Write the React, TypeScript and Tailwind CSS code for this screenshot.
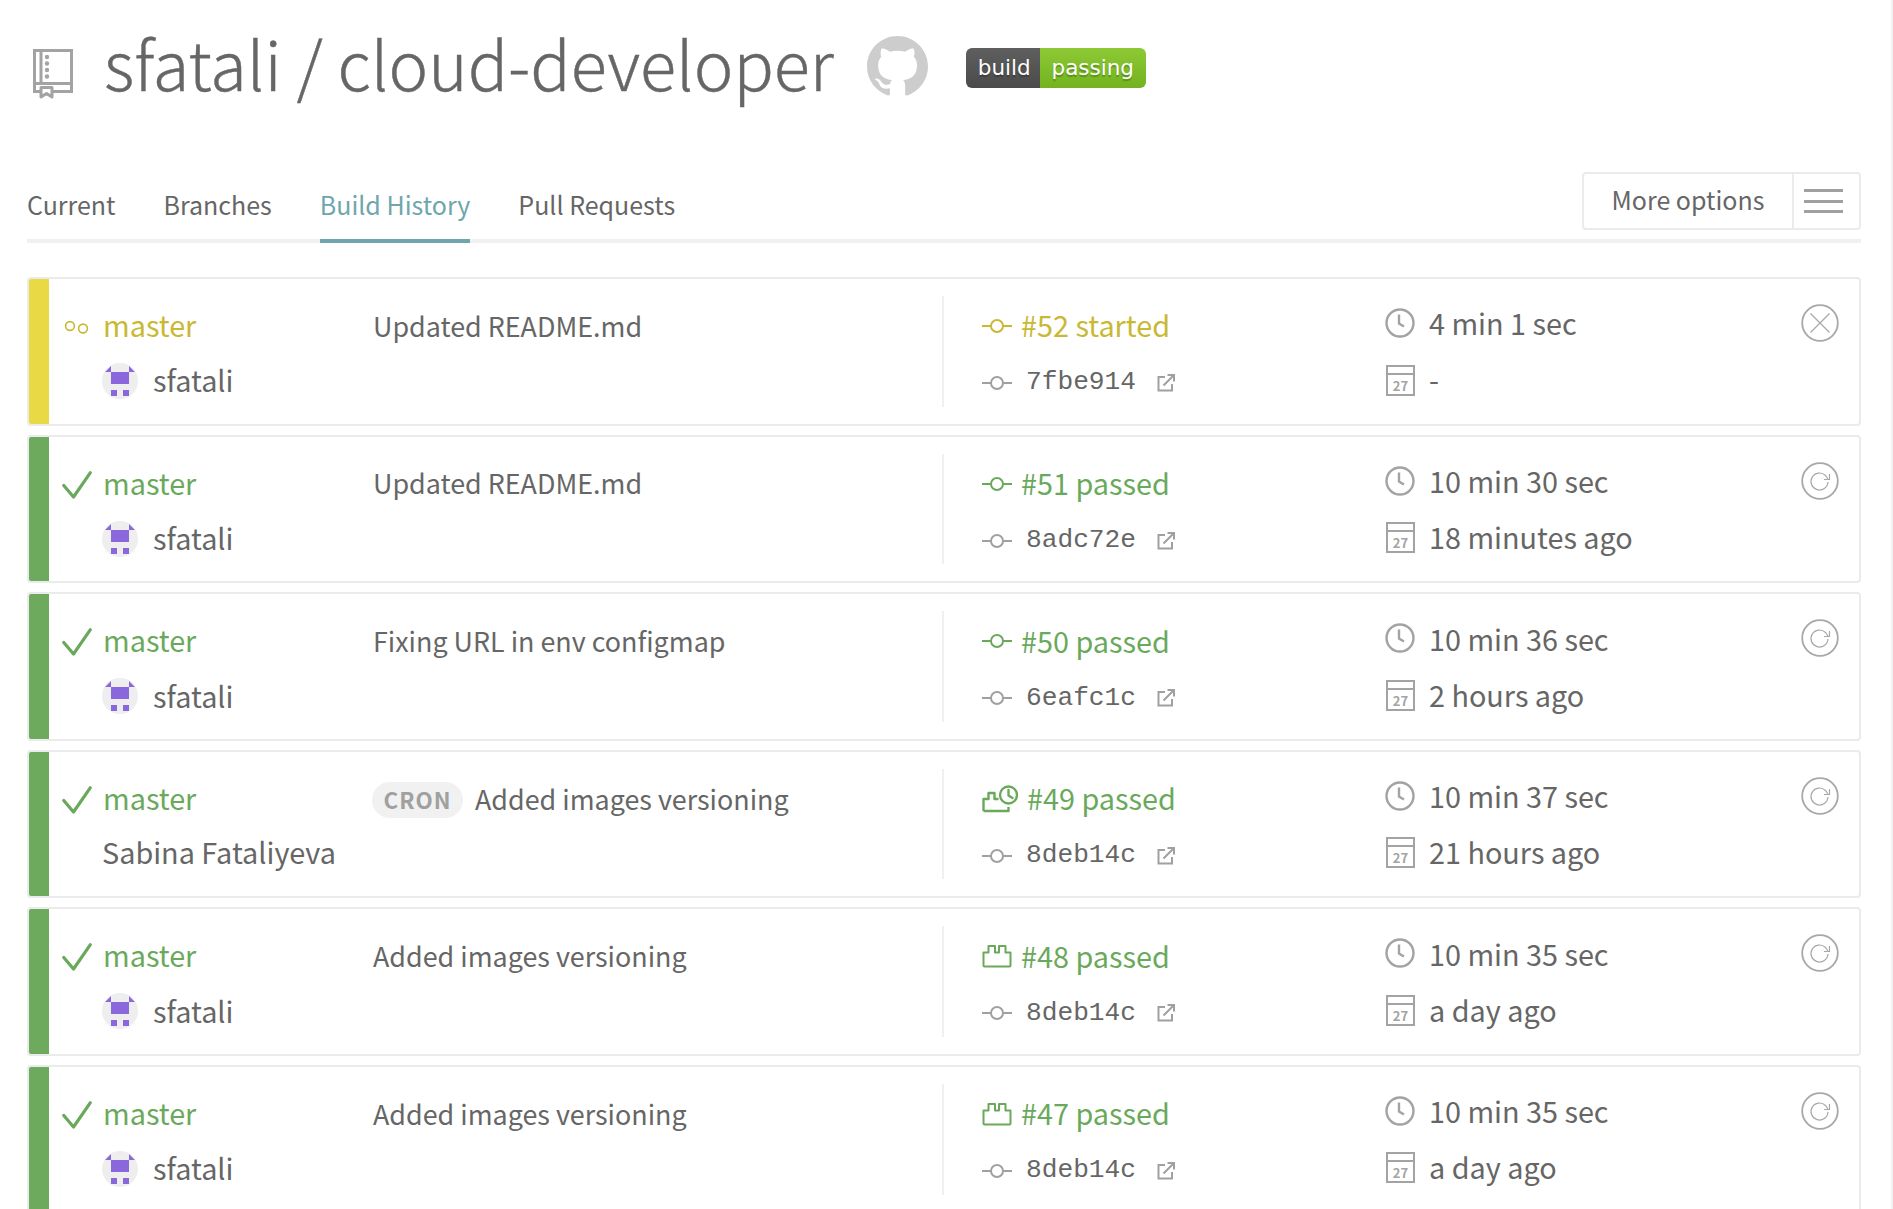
import React from "react";

const SANS = "font-['Noto_Sans_CJK_SC','Source_Sans_Pro',sans-serif]";

type Build = {
  state: "started" | "passed";
  message: string;
  author: string;
  avatar: boolean;
  cron?: boolean;
  number: string;
  kind: "commit" | "push" | "cron";
  hash: string;
  duration: string;
  finished: string;
};

const builds: Build[] = [
  { state: "started", message: "Updated README.md", author: "sfatali", avatar: true, number: "#52 started", kind: "commit", hash: "7fbe914", duration: "4 min 1 sec", finished: "-" },
  { state: "passed", message: "Updated README.md", author: "sfatali", avatar: true, number: "#51 passed", kind: "commit", hash: "8adc72e", duration: "10 min 30 sec", finished: "18 minutes ago" },
  { state: "passed", message: "Fixing URL in env configmap", author: "sfatali", avatar: true, number: "#50 passed", kind: "commit", hash: "6eafc1c", duration: "10 min 36 sec", finished: "2 hours ago" },
  { state: "passed", message: "Added images versioning", author: "Sabina Fataliyeva", avatar: false, cron: true, number: "#49 passed", kind: "cron", hash: "8deb14c", duration: "10 min 37 sec", finished: "21 hours ago" },
  { state: "passed", message: "Added images versioning", author: "sfatali", avatar: true, number: "#48 passed", kind: "push", hash: "8deb14c", duration: "10 min 35 sec", finished: "a day ago" },
  { state: "passed", message: "Added images versioning", author: "sfatali", avatar: true, number: "#47 passed", kind: "push", hash: "8deb14c", duration: "10 min 35 sec", finished: "a day ago" },
];

function RepoIcon() {
  return (
    <svg width="40" height="50" viewBox="0 0 40 50" fill="none" stroke="#a3a3a3" strokeWidth="3">
      <path d="M1.500 1.500h37v41h-37z" />
      <path d="M8 1.500v33M1.500 34.500h37" />
      <path d="M8 38.500h11v9.500l-5.500-3.500L8 48z" fill="#fff" strokeLinejoin="round" />
      <g fill="#a3a3a3" stroke="none">
        <circle cx="14" cy="8" r="2.200" />
        <circle cx="14" cy="14.500" r="2.200" />
        <circle cx="14" cy="21" r="2.200" />
        <circle cx="14" cy="27.500" r="2.200" />
      </g>
    </svg>
  );
}

function GithubMark() {
  return (
    <svg width="61" height="61" viewBox="0 0 16 16" fill="#cdcdcd">
      <path d="M8 0C3.58 0 0 3.58 0 8c0 3.54 2.29 6.53 5.47 7.59.4.07.55-.17.55-.38 0-.19-.01-.82-.01-1.49-2.01.37-2.53-.49-2.69-.94-.09-.23-.48-.94-.82-1.13-.28-.15-.68-.52-.01-.53.63-.01 1.08.58 1.23.82.72 1.21 1.87.87 2.33.66.07-.52.28-.87.51-1.07-1.78-.2-3.64-.89-3.64-3.95 0-.87.31-1.59.82-2.15-.08-.2-.36-1.02.08-2.12 0 0 .67-.21 2.2.82.64-.18 1.32-.27 2-.27.68 0 1.36.09 2 .27 1.53-1.04 2.2-.82 2.2-.82.44 1.1.16 1.92.08 2.12.51.56.82 1.27.82 2.15 0 3.07-1.87 3.75-3.65 3.95.29.25.54.73.54 1.48 0 1.07-.01 1.93-.01 2.2 0 .21.15.46.55.38A8.013 8.013 0 0016 8c0-4.42-3.58-8-8-8z" />
    </svg>
  );
}

function StateIcon({ state }: { state: Build["state"] }) {
  if (state === "started") {
    return (
      <svg width="26" height="14" viewBox="0 0 26 14" fill="none" stroke="#c9b834" strokeWidth="1.600">
        <circle cx="6" cy="6" r="4.400" />
        <circle cx="19" cy="8.500" r="4.400" />
      </svg>
    );
  }
  return (
    <svg width="30" height="28" viewBox="0 0 30 28" fill="none" stroke="#6aa95c" strokeWidth="3.200" strokeLinecap="round" strokeLinejoin="round">
      <path d="M1.800 14.500L11.500 26 28.200 1.800" />
    </svg>
  );
}

function Avatar() {
  return (
    <svg width="36" height="36" viewBox="0 0 36 36" className="shrink-0">
      <circle cx="18" cy="18" r="18" fill="#eeeeee" />
      <g fill="#8a67dc">
        <path d="M3 9L9 3v6zM27 3l6 6h-6z" />
        <path d="M9 9h18v12H9zM9 27h6v6H9zM21 27h6v6h-6z" />
      </g>
    </svg>
  );
}

function CommitIcon({ color }: { color: string }) {
  return (
    <svg width="30" height="16" viewBox="0 0 30 16" fill="none" stroke={color} strokeWidth="2">
      <circle cx="15" cy="8" r="6" />
      <path d="M0 8h9M21 8h9" />
    </svg>
  );
}

function PushIcon() {
  return (
    <svg width="30" height="24" viewBox="0 0 30 24" fill="none" stroke="#6aa95c" strokeWidth="2" strokeLinejoin="round">
      <path d="M1.500 21.500V8.500h5V2h6.500v6.500h4V2h6.500v6.500h5V21.500a1 1 0 01-1 1h-25a1 1 0 01-1-1z" />
    </svg>
  );
}

function CronIcon() {
  return (
    <svg width="36" height="28" viewBox="0 0 36 28" fill="none" stroke="#6aa95c" strokeWidth="2.400" strokeLinejoin="round">
      <path d="M1.500 26V14h5V8h6v6h4M1.500 26h25v-4" />
      <circle cx="26.500" cy="10" r="8.500" />
      <path d="M26.500 5v5.500l4 2.500" strokeLinecap="round" />
    </svg>
  );
}

function ExternalIcon() {
  return (
    <svg width="18" height="18" viewBox="0 0 18 18" fill="none" stroke="#a0a0a0" strokeWidth="2">
      <path d="M8 3H1.500v13.500H15V10" />
      <path d="M6.500 11.500L16.500 1.500M10.500 1h6.500v6.500" />
    </svg>
  );
}

function ClockIcon() {
  return (
    <svg width="30" height="30" viewBox="0 0 30 30" fill="none" stroke="#a3a3a3" strokeWidth="2.400">
      <circle cx="15" cy="15" r="13.500" />
      <path d="M14 6.500v9l5 3" />
    </svg>
  );
}

function CalendarIcon() {
  return (
    <svg width="29" height="31" viewBox="0 0 29 31" fill="none" stroke="#a3a3a3" strokeWidth="2">
      <path d="M1 1h27v29H1zM1 9h27" />
      <text x="14.500" y="25.500" textAnchor="middle" fontSize="13" fontWeight="700" fontFamily="'Noto Sans CJK SC', sans-serif" fill="#a3a3a3" stroke="none">27</text>
    </svg>
  );
}

function ActionIcon({ state }: { state: Build["state"] }) {
  return (
    <svg width="38" height="38" viewBox="0 0 38 38" fill="none" stroke="#a8a8a8">
      <circle cx="19" cy="19" r="17.800" strokeWidth="1.800" />
      {state === "started" ? (
        <path d="M9.500 9.500l19 19M28.500 9.500l-19 19" strokeWidth="1.200" />
      ) : (
        <>
          <path d="M27 20a8.500 8.500 0 11-2.500-6.500L27 17" strokeWidth="1.200" />
          <path d="M23 17.500h5.500V12" strokeWidth="1.200" />
        </>
      )}
    </svg>
  );
}

function BuildRow({ build }: { build: Build }) {
  const started = build.state === "started";
  const text = started ? "text-[#c9b834]" : "text-[#6aa95c]";
  return (
    <div className="flex h-[148.600px] shrink-0 overflow-hidden rounded-[4px] border-2 border-[#ebebeb] bg-white">
      <div className={`w-5 shrink-0 ${started ? "bg-[#e9da45]" : "bg-[#6eaa5d]"}`} />

      <div className="flex w-[893px] shrink-0 pt-[21px]">
        <div className="flex h-[54px] w-[55px] shrink-0 items-center justify-center">
          <StateIcon state={build.state} />
        </div>
        <div className="w-[269px] shrink-0">
          <div className={`-ml-px h-[54px] text-[28.800px] leading-[50px] ${text}`}>master</div>
          {build.avatar ? (
            <div className="flex h-[54px] items-center gap-[15px] text-[28.800px] text-[#666]">
              <div className="-ml-[2px] flex">
                <Avatar />
              </div>
              <span className="pb-[2px]">{build.author}</span>
            </div>
          ) : (
            <div className="-ml-[2px] h-[54px] text-[28.800px] leading-[50px] text-[#666]">{build.author}</div>
          )}
        </div>
        <div className="flex h-[54px] items-center text-[26.880px] text-[#666]">
          {build.cron && (
            <span className="mr-[12px] -ml-[1px] flex h-[36px] w-[91px] items-center justify-center rounded-full bg-[#f1f1f1] text-[22.400px] font-bold tracking-[1px] text-[#a0a0a0]">
              CRON
            </span>
          )}
          <span className="pb-[2px]">{build.message}</span>
        </div>
      </div>

      <div className="my-[17px] w-[2px] shrink-0 bg-[#f0f0f0]" />

      <div className="w-[442px] shrink-0 pt-[21px]">
        <div className="flex h-[52px] items-center pl-[38px]">
          <div className="flex w-[39px] shrink-0 items-center">
            {build.kind === "commit" && <CommitIcon color={started ? "#c9b834" : "#6aa95c"} />}
            {build.kind === "push" && <PushIcon />}
            {build.kind === "cron" && <CronIcon />}
          </div>
          <span className={`pb-[2px] text-[28.800px] ${text} ${build.kind === "cron" ? "ml-[6px]" : ""}`}>{build.number}</span>
        </div>
        <div className="flex h-[62px] items-center pl-[38px]">
          <div className="flex w-[44px] shrink-0 items-center">
            <CommitIcon color="#a0a0a0" />
          </div>
          <span className="font-['Liberation_Mono',monospace] text-[26.200px] text-[#666]">{build.hash}</span>
          <div className="ml-[21px] flex">
            <ExternalIcon />
          </div>
        </div>
      </div>

      <div className="min-w-0 flex-1 pt-[17px]">
        <div className="flex items-start">
          <div className="w-[415px] shrink-0">
            <div className="flex h-[54px] items-center">
              <div className="flex w-[43px] shrink-0 -translate-x-px">
                <ClockIcon />
              </div>
              <span className="text-[28.800px] text-[#666]">{build.duration}</span>
            </div>
            <div className="flex h-[58px] items-center">
              <div className="flex w-[43px] shrink-0 translate-y-px">
                <CalendarIcon />
              </div>
              <span className="text-[28.800px] text-[#666]">{build.finished}</span>
            </div>
          </div>
          <div className="pt-[8px]">
            <ActionIcon state={build.state} />
          </div>
        </div>
      </div>
    </div>
  );
}

export default function App() {
  return (
    <div className={`h-[1209px] overflow-hidden border-r-2 border-[#f1f1f1] bg-white pr-[30px] pl-[27px] text-[#666] ${SANS}`}>
      <header className="flex h-[172px] items-start">
        <div className="mt-[49px] ml-[6px] flex w-[71px] shrink-0">
          <RepoIcon />
        </div>
        <h1 className="mt-[20px] text-[66.800px] leading-[85px] font-light whitespace-nowrap text-[#666] [-webkit-text-stroke:0.4px_#666]">sfatali / cloud-developer</h1>
        <div className="mt-[36px] ml-[33px] flex">
          <GithubMark />
        </div>
        <div className="mt-[48px] ml-[38px] flex h-[40px] w-[180px] overflow-hidden rounded-[6px] font-['DejaVu_Sans',sans-serif] text-[21.500px] text-white [text-shadow:0_2px_1px_rgba(0,0,0,0.25)]">
          <div className="flex w-[74px] items-center justify-center bg-linear-to-b from-[#5f5f5f] to-[#4b4b4b] pt-[1px] pl-[3px]">build</div>
          <div className="flex flex-1 items-center justify-center bg-linear-to-b from-[#8dc935] to-[#72b31e] pt-[1px]">passing</div>
        </div>
      </header>

      <nav className="relative flex h-[71px] border-b-4 border-[#f0f0f0]">
        <div className="flex gap-[48px] pt-[10px] text-[25px] leading-[44px]">
          <span>Current</span>
          <span>Branches</span>
          <span className="relative text-[#6fa6ad]">
            Build History
            <span className="absolute right-0 -bottom-[4px] left-0 h-1 bg-[#6fa6ad]" />
          </span>
          <span>Pull Requests</span>
        </div>
        <div className="absolute top-0 right-0 flex h-[58px] w-[279px] rounded-[4px] border-2 border-[#ebebeb] text-[25px]">
          <div className="flex w-[210px] items-center justify-center border-r-2 border-[#ebebeb] pb-[2px]">More options</div>
          <div className="flex flex-1 flex-col items-center justify-center gap-[7.500px] pr-[6px]">
            <span className="h-[3px] w-[39px] bg-[#a0a0a0]" />
            <span className="h-[3px] w-[39px] bg-[#a0a0a0]" />
            <span className="h-[3px] w-[39px] bg-[#a0a0a0]" />
          </div>
        </div>
      </nav>

      <div className="mt-[34px] flex flex-col gap-[9px]">
        {builds.map((build) => (
          <BuildRow key={build.number} build={build} />
        ))}
      </div>
    </div>
  );
}
